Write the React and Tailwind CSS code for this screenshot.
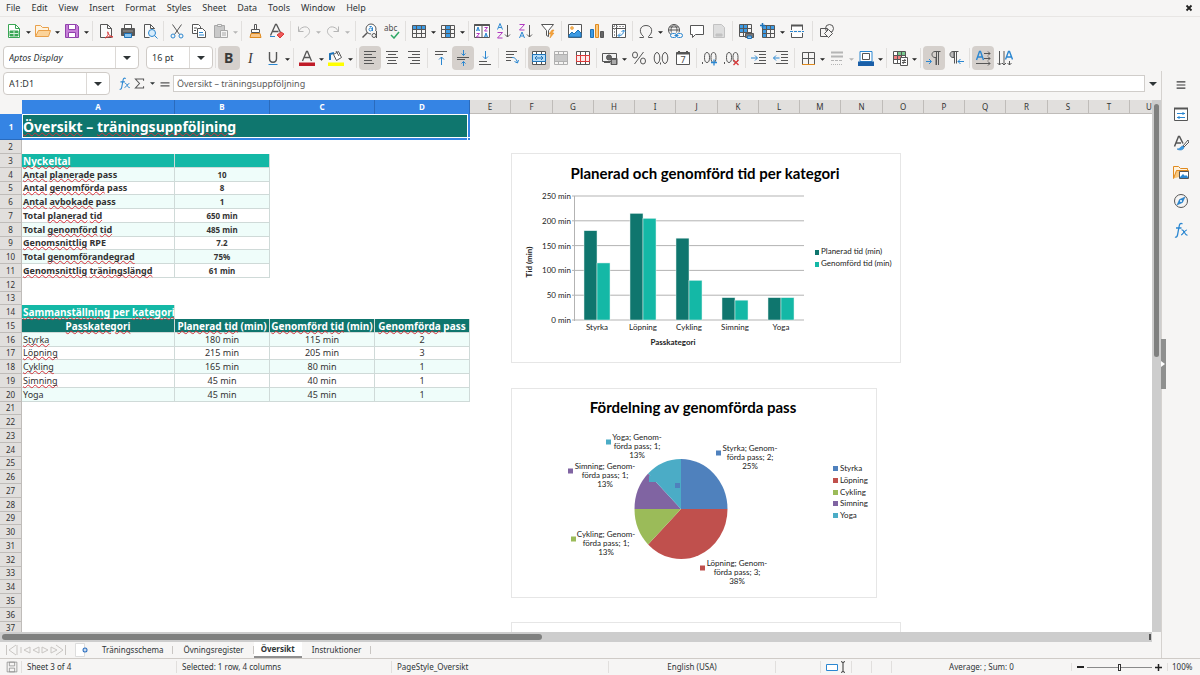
import React, { useState } from 'react';

const menus = ['File', 'Edit', 'View', 'Insert', 'Format', 'Styles', 'Sheet', 'Data', 'Tools', 'Window', 'Help'];
const letters = 'EFGHIJKLMNOPQRSTU'.split('');
const knownWords = ['pass', 'Total', 'RPE', 'per', 'Yoga', '(min)', '–'];

const keyFigures = {
  4: ['Antal planerade pass', '10'],
  5: ['Antal genomförda pass', '8'],
  6: ['Antal avbokade pass', '1'],
  7: ['Total planerad tid', '650 min'],
  8: ['Total genomförd tid', '485 min'],
  9: ['Genomsnittlig RPE', '7.2'],
  10: ['Total genomförandegrad', '75%'],
  11: ['Genomsnittlig träningslängd', '61 min'],
};

const categories = {
  16: ['Styrka', 180, 115, 2],
  17: ['Löpning', 215, 205, 3],
  18: ['Cykling', 165, 80, 1],
  19: ['Simning', 45, 40, 1],
  20: ['Yoga', 45, 45, 1],
};

/* ---------- icons ---------- */

const Icon = ({ children, className = 'w-4 h-4', stroke = '#565656' }) => (
  <svg viewBox="0 0 16 16" className={className} fill="none" stroke={stroke} strokeWidth="1" aria-hidden="true">
    {children}
  </svg>
);

const T = ({ x, y, size, fill, bold, italic, serif, children }) => (
  <text
    x={x}
    y={y}
    fontSize={size}
    fill={fill || '#4d4d4d'}
    stroke="none"
    fontWeight={bold ? 700 : 400}
    fontStyle={italic ? 'italic' : 'normal'}
    fontFamily={serif ? 'Liberation Serif, serif' : 'Noto Sans, sans-serif'}
  >
    {children}
  </text>
);

const gridLines = 'M1.5 2.5h13v12h-13zM1.5 6.5h13M1.5 10.5h13M5.5 2.5v12M10.5 2.5v12';

const icons = {
  newDoc: (
    <g stroke="#3aa655">
      <path d="M2.5 1.5h7l4 4v9h-11z" fill="#fff" />
      <path d="M9.5 1.5v4h4" />
      <path d="M4 8h8v5H4z" fill="#3aa655" />
      <path d="M4 10.5h8M8 8v5" stroke="#d5f0dc" />
    </g>
  ),
  open: (
    <g stroke="#e9a04a">
      <path d="M.5 13.5v-11h5l2 2h6v3" fill="#fff3df" />
      <path d="M.5 13.5l3-6h12l-2 6z" fill="#fbd39a" />
    </g>
  ),
  save: (
    <g stroke="#9141ac">
      <path d="M1.5 1.5h11l2 2v11h-13z" fill="#c77fd8" />
      <path d="M4.5 1.5h7v5h-7zM4.5 9.5h7v5h-7z" fill="#fff" />
    </g>
  ),
  pdf: (
    <g>
      <path d="M2.5 1.5h7l4 4v9h-11z" fill="#fafafa" />
      <path d="M9.5 1.5v4h4" />
      <path d="M7 15c3-2 4-5 3-6s-1 3 5 5c-3-1-6 0-8 1z" stroke="#d93a3a" />
    </g>
  ),
  print: (
    <g>
      <path d="M4.5 1.5h7v4h-7z" fill="#fff" />
      <path d="M1.5 5.5h13v7h-13z" fill="#5a5a5a" />
      <path d="M4.5 10.5h7v4h-7z" fill="#8cc4ee" stroke="#1e73b8" />
      <path d="M3 8h10" stroke="#9a9a9a" />
    </g>
  ),
  preview: (
    <g>
      <path d="M12.5 6V5.5l-4-4h-6v13h5" fill="#fafafa" />
      <path d="M8.5 1.5v4h4" />
      <circle cx="10" cy="10" r="3.5" fill="#d7ecfb" stroke="#2b87d1" />
      <path d="M12.5 12.5l3 3" stroke="#2b87d1" />
    </g>
  ),
  cut: (
    <g>
      <path d="M3.5 1.5l7 10M12.5 1.5l-7 10" />
      <circle cx="4" cy="13" r="2" stroke="#2b87d1" />
      <circle cx="12" cy="13" r="2" stroke="#2b87d1" />
    </g>
  ),
  copy: (
    <g>
      <path d="M1.5 1.5h6l2 2v7h-8z" fill="#fff" />
      <path d="M6.5 5.5h5l3 3v6h-8z" fill="#fff" />
      <path d="M3 5h3M3 7.5h2" />
      <path d="M8 9.5h4M8 12h5" stroke="#2b87d1" />
    </g>
  ),
  paste: (
    <g stroke="#a8a8a8">
      <path d="M1.5 2.5h10v12h-10z" fill="#c9c9c9" />
      <path d="M4.5 1.5h4v2h-4z" fill="#eee" />
      <path d="M7.5 7.5h7v7h-7z" fill="#f4f4f4" />
      <path d="M9 10h4M9 12h4" />
    </g>
  ),
  brush: (
    <g>
      <path d="M7.5 1.5h2v5h-2zM4.5 6.5h8v3h-8z" fill="#fff" />
      <path d="M4 10.5h9l1 4h-11z" fill="#f9c78a" stroke="#e08a1e" />
    </g>
  ),
  clear: (
    <g>
      <path d="M1.5 12.5l5-11h1l4 8M3.5 8.5h6" strokeWidth="1.3" />
      <path d="M8 12l4-3 3 2-4 4z" fill="#ee5a5a" stroke="#d93a3a" />
      <path d="M1 13.5h5" stroke="#2b87d1" />
    </g>
  ),
  undo: <path d="M2.5 3.5v5h5M2.5 8.5c3-6 10-6 11-1 .5 3-2 5-5 7" stroke="#b5b5b5" />,
  redo: <path d="M13.5 3.5v5h-5M13.5 8.5c-3-6-10-6-11-1-.5 3 2 5 5 7" stroke="#b5b5b5" />,
  find: (
    <g>
      <circle cx="9" cy="6" r="5" fill="#fff" />
      <path d="M5.5 9.5l-5 5" strokeWidth="1.5" />
      <circle cx="8.500" cy="6.500" r="1.500" stroke="#2b87d1" />
      <path d="M7.500 3.500h2l1 1v4" stroke="#2b87d1" />
      <path d="M9 8h6v8H9z" fill="#f6f5f4" stroke="none" />
      <circle cx="12" cy="12.500" r="2" />
      <path d="M14.500 8v7" />
    </g>
  ),
  spell: (
    <g>
      <T x="0" y="8" size="8">abc</T>
      <path d="M7 12l3 3 5-6" stroke="#2fa866" strokeWidth="1.5" />
    </g>
  ),
  row: (
    <g>
      <path d="M1 2.5h14v4H1z" fill="#3d9be4" stroke="none" />
      <path d={gridLines} />
    </g>
  ),
  col: (
    <g>
      <path d="M5 2h5v13H5z" fill="#3d9be4" stroke="none" />
      <path d={gridLines} />
    </g>
  ),
  sort: (
    <g>
      <path d="M.5 1.5h15v13H.5zM8 2v12" fill="#fff" />
      <path d="M.5 2h15" strokeWidth="2" />
      <path d="M2.500 8l1.500-4 1.500 4M3 7h2M10.500 14l1.500-4 1.500 4M11 13h2" stroke="#2b87d1" />
      <path d="M10.500 4.500h3l-3 3.500h3M2.500 10.500h3l-3 3.500h3" stroke="#b03ac0" />
    </g>
  ),
  sortAsc: (
    <g>
      <path d="M1.500 6.500L4 .500l2.500 6M2.500 4.500h3" stroke="#2b87d1" />
      <path d="M1.500 9.500h5l-5 5.500h5" stroke="#b03ac0" />
      <path d="M11.5 2v12M9 11.5l2.500 2.500 2.500-2.500" />
    </g>
  ),
  sortDesc: (
    <g>
      <path d="M1.500 1.500h5l-5 5.500h5" stroke="#b03ac0" />
      <path d="M1.500 15L4 9l2.500 6M2.500 13h3" stroke="#2b87d1" />
      <path d="M11.5 2v12M9 11.5l2.500 2.500 2.500-2.500" />
    </g>
  ),
  filter: (
    <g>
      <path d="M1.5 1.5h12l-5 6v6l-2-1v-5z" fill="#fff" />
      <path d="M12 7l-3 4h2l-1 4 4-5h-2l2-3z" fill="#f7a23b" stroke="#e08a1e" strokeWidth=".5" />
    </g>
  ),
  image: (
    <g>
      <path d="M1.5 1.5h13v13h-13z" fill="#fff" />
      <path d="M2 14v-2l3-3 2 2 4-4 3 3v4z" fill="#3d9be4" stroke="#1e73b8" />
      <circle cx="5" cy="5" r="1.5" fill="#f7b55b" stroke="#e08a1e" strokeWidth=".5" />
    </g>
  ),
  chart: (
    <g>
      <path d="M1.5 6.5h3v8h-3z" fill="#3d9be4" stroke="#1e73b8" />
      <path d="M6.5 1.5h3v13h-3z" fill="#fbc97f" stroke="#e08a1e" />
      <path d="M11.5 8.5h3v6h-3z" fill="#666" />
    </g>
  ),
  pivot: (
    <g>
      <path d="M1.5 1.5h13v13h-13zM5.5 1.5v13M1.5 5.5h13" fill="#fff" />
      <path d="M2 3.5h12M3.5 2v12" stroke="#9a9a9a" strokeDasharray="2 1" />
      <path d="M7.5 12.5c4 0 5-2 5-5M7 12.5l2-2M7 12.5l2 2M12.5 7l-2 2M12.5 7l2 2" stroke="#2b87d1" />
    </g>
  ),
  omega: <path d="M1.5 14.5h4v-1c-5-4-4-11 2.500-11s7.500 7 2.500 11v1h4" />,
  link: (
    <g>
      <circle cx="7" cy="7" r="5.5" />
      <path d="M1.5 7h11M7 1.5c-4 3-4 8 0 11M7 1.5c4 3 4 8 0 11M2.5 4h9" />
      <path d="M4 9.5h12v6H4z" fill="#f6f5f4" stroke="none" />
      <rect x="3.5" y="10.5" width="6" height="4" rx="2" stroke="#2b87d1" />
      <rect x="9.5" y="10.5" width="6" height="4" rx="2" stroke="#2b87d1" />
      <path d="M7.5 12.5h4" stroke="#2b87d1" />
    </g>
  ),
  comment: <path d="M1.5 2.5h13v9h-8l-3 3v-3h-2z" fill="#fff" />,
  headFoot: (
    <g stroke="#c2c2c2">
      <path d="M2.5 1.5h8l3 3v10h-11z" fill="#dedede" />
      <path d="M5 11h6v2H5z" fill="#c2c2c2" />
    </g>
  ),
  printArea: (
    <g>
      <path d="M1 2h9v7H1z" fill="#3d9be4" stroke="none" />
      <path d="M1.5 1.5h12v12h-12zM1.5 5.5h12M1.5 9.5h12M5.5 1.5v12M9.5 1.5v12" />
      <path d="M7.5 10.5h8v4h-8z" fill="#777" />
      <path d="M9.5 13h4v2.5h-4z" fill="#8cc4ee" stroke="#1e73b8" />
    </g>
  ),
  freeze: (
    <g>
      <path d="M3 3h4v12H3zM3 3h12v3H3z" fill="#3d9be4" stroke="none" />
      <path d="M2.5 2.5h12v12h-12zM2.5 6.5h12M2.5 10.5h12M6.5 2.5v12M10.5 2.5v12" />
      <path d="M0 2.5h5M2.5 0v5" stroke="#1e73b8" strokeWidth="1.5" />
    </g>
  ),
  split: (
    <g>
      <path d="M2.5 7V2.5h11V7M2.5 10v4.500h11V10" fill="#fff" />
      <path d="M2 2.5h12" strokeWidth="2" />
      <path d="M1 8.5h14" stroke="#2b87d1" strokeDasharray="3 1" />
    </g>
  ),
  shapes: (
    <g>
      <path d="M1.5 5.5h7v8h-7z" />
      <circle cx="10.5" cy="5.5" r="4" />
      <path d="M9.5 6.5l4 4-4 4-4-4z" fill="#f6f5f4" />
    </g>
  ),
  bold: <T x="3" y="13" size="14" bold fill="#3a3a3a">B</T>,
  italic: <T x="5" y="13" size="14" italic serif fill="#3a3a3a">I</T>,
  underline: (
    <g>
      <path d="M4.5 2v6.500c0 5 7 5 7 0V2" strokeWidth="1.4" />
      <path d="M3.5 14.5h9" stroke="#2b87d1" />
    </g>
  ),
  fontColor: (
    <g>
      <path d="M3.5 11l4-9.500h1l4 9.500M5 7.5h6" strokeWidth="1.3" />
      <path d="M0 12.5h16v3.500H0z" fill="#c01c28" stroke="none" />
    </g>
  ),
  highlight: (
    <g>
      <path d="M5.5 4.5l5-3 3 6-5 3z" fill="#fff" />
      <path d="M2 10V4l4-1" stroke="#1e73b8" strokeWidth="2" />
      <path d="M8 1l3 5" />
      <path d="M0 12.5h16v3.500H0z" fill="#ffff00" stroke="none" />
    </g>
  ),
  left: <path d="M2 1.5h12M2 4.500h8M2 7.500h12M2 10.500h8M2 13.500h10" />,
  center: <path d="M2 1.500h12M4 4.500h8M2 7.500h12M4 10.500h8M3 13.500h10" />,
  right: <path d="M2 1.500h12M6 4.500h8M2 7.500h12M6 10.500h8M4 13.500h10" />,
  top: (
    <g>
      <path d="M2 1.5h12M2 4.5h8" />
      <path d="M8.5 15V7M6 9.5L8.5 7 11 9.5" stroke="#2b87d1" />
    </g>
  ),
  middle: (
    <g>
      <path d="M2 7.5h12M2 9.5h8" />
      <path d="M8.5 0v5.500M6.5 3.5l2 2 2-2M8.5 16v-4.500M6.5 13.5l2-2 2 2" stroke="#2b87d1" />
    </g>
  ),
  bottom: (
    <g>
      <path d="M2 11.5h8M2 14.5h12" />
      <path d="M8.5 1v8M6 6.5L8.5 9 11 6.5" stroke="#2b87d1" />
    </g>
  ),
  wrap: (
    <g>
      <path d="M2 1.5h11M2 4.5h8M2 7.5h7M2 10.5h5" />
      <path d="M8 7.5c3 0 4 1 5.500 5M10.5 11.5l3 1.500 1-3" stroke="#2b87d1" />
    </g>
  ),
  merge: (
    <g>
      <path d="M1.5 1.5h13v13h-13zM1.5 4.5h13M1.5 11.5h13M5.5 1.5v3M10.5 1.5v3M5.5 11.5v3M10.5 11.5v3" fill="#fff" />
      <path d="M1.5 4.5h13v7h-13zM4 8h8M6 6L4 8l2 2M10 6l2 2-2 2" fill="#b5dcf8" stroke="#1e73b8" />
    </g>
  ),
  mergeGray: (
    <g stroke="#b0b0b0">
      <path d="M1.5 1.5h13v13h-13zM1.5 4.5h13M1.5 11.5h13M5.5 1.5v3M10.5 1.5v3M5.5 11.5v3M10.5 11.5v3" />
      <path d="M2 5h12v6H2z" fill="#c8c8c8" stroke="none" />
    </g>
  ),
  splitCells: (
    <g>
      <path d="M1.5 1.5h13v13h-13zM5.5 1.5v13M10.5 1.5v13" fill="#fff" />
      <path d="M1.5 5.5h13v6h-13zM5.5 5.5v6M10.5 5.5v6" stroke="#d93a3a" fill="#fdeaea" />
    </g>
  ),
  currency: (
    <g>
      <path d="M.5 3.5h14v8H.5z" fill="#f4f4f4" />
      <circle cx="7" cy="7.5" r="2.5" fill="#666" />
      <path d="M9 8.5h6v6H9zM2 12.5h6" fill="#666" />
      <path d="M10 11h4M10 13h4" stroke="#eee" />
    </g>
  ),
  percent: (
    <g>
      <ellipse cx="4" cy="5" rx="2.500" ry="3" />
      <ellipse cx="12" cy="11" rx="2.500" ry="3" />
      <path d="M12.500 2l-9 12" />
    </g>
  ),
  number: (
    <g>
      <ellipse cx="4" cy="8" rx="2.8" ry="5.5" />
      <ellipse cx="12" cy="8" rx="2.8" ry="5.5" />
      <path d="M7.5 12.5v2" />
    </g>
  ),
  date: (
    <g>
      <path d="M1.5 2.5h13v12h-13z" fill="#fff" />
      <path d="M1.5 3.5h13M4 1v3M12 1v3" strokeWidth="2" />
      <T x="5.500" y="13" size="9">7</T>
    </g>
  ),
  addDec: (
    <g>
      <path d="M.5 12v2" />
      <ellipse cx="5" cy="7.5" rx="2.5" ry="5" />
      <ellipse cx="11.5" cy="7.5" rx="2.5" ry="5" />
      <path d="M9 12.5h6M12 9.5v6" stroke="#2b87d1" strokeWidth="1.3" />
    </g>
  ),
  delDec: (
    <g>
      <path d="M.5 12v2" />
      <ellipse cx="5" cy="7.5" rx="2.5" ry="5" />
      <ellipse cx="11.5" cy="7.5" rx="2.5" ry="5" />
      <path d="M9.5 10l5 5M14.5 10l-5 5" stroke="#d93a3a" strokeWidth="1.3" />
    </g>
  ),
  indent: (
    <g>
      <path d="M3 1.5h12M8 4.5h7M8 7.5h7M8 10.5h7M3 13.5h12" />
      <path d="M0 8h6M4 5.5L6.5 8 4 10.5" stroke="#2b87d1" />
    </g>
  ),
  outdent: (
    <g>
      <path d="M3 1.5h12M8 4.5h7M8 7.5h7M8 10.5h7M3 13.5h12" />
      <path d="M.5 8h6M3 5.5L.5 8 3 10.5" stroke="#2b87d1" />
    </g>
  ),
  borders: (
    <g>
      <path d="M2.5 14V2.5h12V14M8.5 2v12M2 8.5h12" />
      <path d="M2 14.5h13" stroke="#e08a1e" />
    </g>
  ),
  lineStyle: (
    <g stroke="#b5b5b5">
      <path d="M2 2.5h12" strokeWidth="2" />
      <path d="M2 6.5h12" strokeWidth="2" />
      <path d="M2 10.5h12" strokeDasharray="3 1" />
      <path d="M2 14.5h12" strokeDasharray="1 1" />
    </g>
  ),
  borderColor: (
    <g>
      <path d="M2 1.5h12v10H2z" stroke="#2b87d1" fill="#fff" />
      <path d="M4.5 3.5h7v6h-7z" />
      <path d="M0 11.5h16v4.500H0z" fill="#1a5fa8" stroke="none" />
    </g>
  ),
  cond: (
    <g>
      <path d="M1.5 1.5h12v12h-12z" fill="#fff" />
      <path d="M5 2h8v3H5z" fill="#7ac98f" stroke="none" />
      <path d="M2 5h7v5H2z" fill="#f08080" stroke="none" />
      <path d="M1.5 5.5h12M1.5 9.5h12M5.5 1.5v12M9.5 1.5v12" />
      <path d="M8.5 7.5h7v8h-7z" fill="#fff" />
      <path d="M10 10.5h4M10 12.5h4M13 9l-2 5" />
    </g>
  ),
  ltr: (
    <g>
      <path d="M14.5 1.5H9c-4 0-4 6 0 6h1V15M10.5 1.5V15M12.5 1.5V15" />
      <path d="M0 11.5h5M3 9l2.500 2.500L3 14" stroke="#2b87d1" />
    </g>
  ),
  rtl: (
    <g>
      <path d="M5 1.5c-4 0-4 6 0 6h1v-6z" fill="#bbb" />
      <path d="M10.500 1.500H5M6.500 1.500v12M8.500 1.500v12" />
      <path d="M10 11.5h6M12.5 9L10 11.5l2.500 2.500" stroke="#2b87d1" />
    </g>
  ),
  horiz: (
    <g>
      <path d="M1.5 10l3-8.500h1l3 8.500M3 7h5" stroke="#2b87d1" strokeWidth="1.4" />
      <path d="M9 3.5h6M9 8.5h6M1 13.5h14M13 1.5l2 2-2 2M13 6.5l2 2-2 2M13 11.5l2 2-2 2" />
    </g>
  ),
  vert: (
    <g>
      <path d="M8.5 9.500l3-8h1l3 8M10 7h4" stroke="#2b87d1" strokeWidth="1.4" />
      <path d="M2.500 1v14M7 1v14M12.500 11v4M.5 13l2 2 2-2M5 13l2 2 2-2M10.5 13l2 2 2-2" />
    </g>
  ),
  fx: (
    <g>
      <path d="M9.5 2c-2-1.500-3 0-3.500 3l-1.500 8c-.5 2-1.500 2.500-2.500 2M3 6h5.500" stroke="#2b87d1" strokeWidth="1.3" />
      <path d="M8.5 8c3-1 3 6 6 5M14 8c-2-.5-4 5-6 5" stroke="#2b87d1" strokeWidth="1.2" />
    </g>
  ),
  sum: <path d="M13 4.5v-2H3l5 5.500-5 5.500h10v-2" strokeWidth="1.3" />,
  equals: <path d="M2 6.5h12M2 10.5h12" strokeWidth="1.5" />,
  hamburger: <path d="M1 3h14M1 8h14M1 13h14" stroke="#3a3a3a" strokeWidth="1.8" />,
  properties: (
    <g>
      <path d="M1.5 2.5h13v12h-13z" fill="#fff" />
      <path d="M1 2.5h14" strokeWidth="2" />
      <path d="M4 7.5h8M4 11.5h8M10 6v3M6 10v3" stroke="#2b87d1" />
    </g>
  ),
  styles: (
    <g>
      <path d="M1.5 11.5l4-10h1l3.500 7M3 8h5" strokeWidth="1.5" />
      <path d="M15 5l-5 6 1 1 5-5z" fill="#fff" />
      <path d="M10 11c-3 0-2 3-6 3 3 2 7 1 7-2z" fill="#3d9be4" stroke="#1e73b8" strokeWidth=".5" />
    </g>
  ),
  gallery: (
    <g>
      <path d="M.5 14.5v-12h5l2 2h7v3" stroke="#e08a1e" fill="#fff3df" />
      <path d="M.5 14.5l3-8h12v4" stroke="#e08a1e" fill="#fbc97f" />
      <path d="M6.5 7.5h9v7h-9z" fill="#fff" />
      <path d="M7 14v-1l3-3 2 2 1-1 2 2v1z" fill="#2b87d1" stroke="none" />
    </g>
  ),
  compass: (
    <g>
      <circle cx="8" cy="8" r="6.5" />
      <path d="M12 4l-2.500 5.500L4 12l2.500-5.500z" fill="#2b87d1" stroke="#1e73b8" strokeWidth=".5" />
      <circle cx="8" cy="8" r="1" fill="#fff" stroke="none" />
    </g>
  ),
};

const Caret = ({ className = 'w-2 h-2' }) => (
  <svg viewBox="0 0 8 8" className={className} fill="currentColor" aria-hidden="true">
    <path d="M0 2h8L4 6z" />
  </svg>
);

const IconButton = ({ icon, active }) => (
  <button
    type="button"
    aria-label={icon}
    aria-pressed={active}
    className={`flex h-6 w-[22px] shrink-0 items-center justify-center rounded ${active ? 'bg-[#d5d0cc]' : 'hover:bg-black/5'}`}
  >
    <Icon>{icons[icon]}</Icon>
  </button>
);

const Drop = ({ gray }) => (
  <button
    type="button"
    aria-label="More options"
    className={`flex h-6 w-[7px] shrink-0 items-center justify-center pt-1 ${gray ? 'text-[#b5b5b5]' : 'text-[#222]'}`}
  >
    <Caret className="h-[5px] w-[5px]" />
  </button>
);

const Sep = ({ wide }) => (
  <span className={`flex shrink-0 justify-center ${wide ? 'w-2' : 'w-[5px]'}`}>
    <span className="h-5 w-px bg-[#e1dfdd]" />
  </span>
);

// '|' separator, '||' wide separator, 'v' arrow, 'g' gray arrow, '*' marks a pressed button
const Toolbar = ({ items }) =>
  items.map((item, i) => {
    if (item === '|') return <Sep key={i} />;
    if (item === '||') return <Sep key={i} wide />;
    if (item === 'v') return <Drop key={i} />;
    if (item === 'g') return <Drop key={i} gray />;
    return <IconButton key={i} icon={item.replace('*', '')} active={item.endsWith('*')} />;
  });

const standardBar = [
  'newDoc', 'v', 'open', 'v', 'save', 'v', '|', 'pdf', 'print', 'preview', '|', 'cut', 'copy', 'paste', 'g', '|',
  'brush', 'clear', '|', 'undo', 'g', 'redo', 'g', '||', 'find', 'spell', '|', 'row', 'v', 'col', 'v', '|',
  'sort', 'sortAsc', 'sortDesc', 'filter', '|', 'image', 'chart', 'pivot', '|', 'omega', 'v', 'link', 'comment',
  'headFoot', '|', 'printArea', 'freeze', 'v', 'split', '||', 'shapes',
];

const formatBar = [
  '|', 'bold*', 'italic', 'underline', 'v', '|', 'fontColor', 'v', 'highlight', 'v', '|', 'left*', 'center', 'right',
  '|', 'top', 'middle*', 'bottom', '|', 'wrap', '|', 'merge*', 'mergeGray', 'splitCells', '|', 'currency', 'v',
  'percent', 'number', 'date', '|', 'addDec', 'delDec', '|', 'indent', 'outdent', '|', 'borders', 'v', 'lineStyle',
  'g', 'borderColor', 'v', '|', 'cond', 'v', '|', 'ltr*', 'rtl', '|', 'horiz*', 'vert',
];

const Combo = ({ label, value, className, inputClass = '' }) => (
  <div className={`flex h-[23px] shrink-0 rounded border border-[#cfcbc7] bg-white ${className}`}>
    <input aria-label={label} defaultValue={value} className={`min-w-0 flex-1 rounded pl-[5px] outline-none ${inputClass}`} />
    <button type="button" aria-label={`${label} list`} className="flex w-[23px] items-center justify-center border-l border-[#dcd9d6]">
      <Caret />
    </button>
  </div>
);

/* ---------- sheet ---------- */

const Spell = ({ text }) =>
  text.split(' ').map((word, i) => (
    <React.Fragment key={i}>
      {i > 0 && ' '}
      {knownWords.includes(word) ? (
        word
      ) : (
        <span className="underline decoration-[#d6303a] decoration-wavy decoration-1 underline-offset-0 [text-decoration-skip-ink:none]">
          {word}
        </span>
      )}
    </React.Fragment>
  ));

const cell = 'border-b border-r border-[#cfdad8] p-0 whitespace-nowrap leading-[12px]';

const RowCells = ({ n }) => {
  if (n === 3) {
    return (
      <>
        <td className={`${cell} bg-[#14b8a6] pl-px text-[10px] font-bold text-white`}><Spell text="Nyckeltal" /></td>
        <td className={`${cell} bg-[#14b8a6]`} />
      </>
    );
  }
  if (keyFigures[n]) {
    const fill = n % 2 === 0 ? 'bg-[#effdfa]' : 'bg-white';
    return (
      <>
        <td className={`${cell} ${fill} pl-px font-bold`}><Spell text={keyFigures[n][0]} /></td>
        <td className={`${cell} ${fill} text-center text-[8px] font-bold`}>{keyFigures[n][1]}</td>
      </>
    );
  }
  if (n === 14) {
    return <td className={`${cell} bg-[#14b8a6] pl-px text-[10px] font-bold text-white`}><Spell text="Sammanställning per kategori" /></td>;
  }
  if (n === 15) {
    return ['Passkategori', 'Planerad tid (min)', 'Genomförd tid (min)', 'Genomförda pass'].map((title) => (
      <td key={title} className={`${cell} bg-[#0f766e] text-center text-[10px] font-bold text-white`}><Spell text={title} /></td>
    ));
  }
  if (categories[n]) {
    const [name, planned, done, count] = categories[n];
    const fill = n % 2 === 0 ? 'bg-[#effdfa]' : 'bg-white';
    return (
      <>
        <td className={`${cell} ${fill} pl-px`}><Spell text={name} /></td>
        <td className={`${cell} ${fill} text-center`}>{planned} min</td>
        <td className={`${cell} ${fill} text-center`}>{done} min</td>
        <td className={`${cell} ${fill} text-center`}>{count}</td>
      </>
    );
  }
  return null;
};

const SheetTable = () => {
  const rows = Array.from({ length: 36 }, (_, i) => i + 2);
  return (
    <table className="w-full table-fixed border-separate border-spacing-0 text-[9px] text-[#333]">
      <colgroup>
        <col className="w-[22px]" />
        <col className="w-[153px]" />
        <col className="w-[95px]" />
        <col className="w-[105px]" />
        <col className="w-[95px]" />
        {letters.slice(0, -1).map((l, i) => (
          <col key={l} className={i % 4 === 1 ? 'w-[42px]' : 'w-[41px]'} />
        ))}
        <col />
      </colgroup>
      <thead>
        <tr className="h-[14px] leading-[12px]">
          <th className="bg-[#f6f5f4] p-0" />
          {['A', 'B', 'C', 'D'].map((l) => (
            <th key={l} scope="col" className="border-r border-[#2a6bbd] bg-[#3584e4] p-0 text-[8px] font-bold text-white">{l}</th>
          ))}
          {letters.map((l) => (
            <th key={l} scope="col" className={`overflow-hidden border-b border-[#bfbcb9] bg-[#e1dfdd] p-0 text-[8px] font-normal ${l === 'U' ? 'pl-4 text-left' : 'border-r'}`}>
              {l}
            </th>
          ))}
        </tr>
      </thead>
      <tbody>
        <tr className="h-[26px]">
          <th scope="row" className="border-b border-[#2a6bbd] bg-[#3584e4] p-0 text-[8px] font-bold text-white">1</th>
          <td colSpan="4" className="relative border-r-2 border-b-2 border-[#3584e4] p-0">
            <div className="h-6 border border-white bg-[#0f766e] text-[14px] leading-[23px] font-bold whitespace-nowrap text-white">
              <Spell text="Översikt – träningsuppföljning" />
            </div>
            <span className="absolute -right-[3px] -bottom-[3px] h-1 w-1 border border-white bg-[#3584e4]" />
          </td>
        </tr>
        {rows.map((n) => (
          <tr key={n} className={n % 4 === 1 ? 'h-[13px]' : 'h-[14px]'}>
            <th scope="row" className="border-r border-b border-[#bfbcb9] bg-[#e1dfdd] p-0 text-[8px] leading-[12px] font-normal">{n}</th>
            <RowCells n={n} />
          </tr>
        ))}
      </tbody>
    </table>
  );
};

/* ---------- charts ---------- */

const BarChart = () => {
  const data = Object.values(categories);
  const y = (v) => 166 - v * 0.496;
  return (
    <svg viewBox="0 0 388 208" className="block w-full" fontFamily="Lato, sans-serif" fontSize="8" fill="#222">
      <text x="193" y="25" fontSize="15" fontWeight="700" fill="#000" textAnchor="middle">Planerad och genomförd tid per kategori</text>
      {[0, 50, 100, 150, 200, 250].map((v) => (
        <g key={v}>
          <path d={`M60 ${y(v)}H292`} stroke="#b3b3b3" />
          <text x="59" y={y(v) + 3} textAnchor="end">{v} min</text>
        </g>
      ))}
      <path d="M62.5 42v125" stroke="#b3b3b3" />
      {data.map(([name, planned, done], i) => (
        <g key={name}>
          <rect x={72 + i * 46} y={y(planned)} width="13" height={166 - y(planned)} fill="#0f766e" stroke="#e3f1ef" strokeWidth=".5" />
          <rect x={85 + i * 46} y={y(done)} width="13" height={166 - y(done)} fill="#14b8a6" stroke="#e3f1ef" strokeWidth=".5" />
          <text x={85 + i * 46} y="176" textAnchor="middle">{name}</text>
        </g>
      ))}
      <text x="161" y="191" fontWeight="700" textAnchor="middle">Passkategori</text>
      <text x="20" y="108" fontWeight="700" textAnchor="middle" transform="rotate(-90 20 108)">Tid (min)</text>
      <rect x="303" y="96" width="4" height="5" fill="#0f766e" />
      <text x="309" y="100">Planerad tid (min)</text>
      <rect x="303" y="108" width="4" height="5" fill="#14b8a6" />
      <text x="309" y="112">Genomförd tid (min)</text>
    </svg>
  );
};

const slices = [
  { name: 'Styrka', count: 2, percent: 25, color: '#4f81bd', path: 'M169 120V70A46.5 50 0 0 1 215.5 120z', x: 238, y: 62, mx: 204 },
  { name: 'Löpning', count: 3, percent: 38, color: '#c0504d', path: 'M169 120H215.5A46.5 50 0 0 1 136.1 155.4z', x: 225, y: 177, mx: 188 },
  { name: 'Cykling', count: 1, percent: 13, color: '#9bbb59', path: 'M169 120L136.1 155.4A46.5 50 0 0 1 122.5 120z', x: 94, y: 148, mx: 59 },
  { name: 'Simning', count: 1, percent: 13, color: '#8064a2', path: 'M169 120H122.5A46.5 50 0 0 1 136.1 84.6z', x: 93, y: 80, mx: 56 },
  { name: 'Yoga', count: 1, percent: 13, color: '#4bacc6', path: 'M169 120L136.1 84.6A46.5 50 0 0 1 169 70z', x: 125, y: 51, mx: 94 },
];

const PieChart = () => (
  <svg viewBox="0 0 364 208" className="block w-full" fontFamily="Lato, sans-serif" fontSize="8" fill="#222">
    <text x="181" y="24" fontSize="15" fontWeight="700" fill="#000" textAnchor="middle">Fördelning av genomförda pass</text>
    {slices.map((s, i) => (
      <g key={s.name}>
        <path d={s.path} fill={s.color} />
        <rect x={s.mx} y={s.y - 0.5} width="5" height="5" fill={s.color} />
        <text textAnchor="middle">
          <tspan x={s.x} y={s.y}>{s.name}; Genom-</tspan>
          <tspan x={s.x} y={s.y + 9}>förda pass; {s.count};</tspan>
          <tspan x={s.x} y={s.y + 18}>{s.percent}%</tspan>
        </text>
        <rect x="321" y={77 + i * 12 - (i > 2 ? 1 : 0)} width="5" height="5" fill={s.color} />
        <text x="328" y={82 + i * 12 - (i > 2 ? 1 : 0)}>{s.name}</text>
      </g>
    ))}
    <rect x="137" y="87" width="7" height="6" fill="#4bacc6" />
    <rect x="163" y="94" width="5" height="5" fill="#4f81bd" />
  </svg>
);

const sheetTabs = ['Träningsschema', 'Övningsregister', 'Översikt', 'Instruktioner'];

const App = () => {
  const [activeTab, setActiveTab] = useState('Översikt');
  const [zoom, setZoom] = useState(50);

  return (
    <div className="flex h-screen flex-col overflow-hidden bg-[#f6f5f4] font-['Noto_Sans',sans-serif] text-[9px] text-[#2e3436]">
      {/* Menu bar */}
      <nav className="flex h-[17px] shrink-0 items-center gap-px border-b border-[#e8e6e4] pl-px">
        {menus.map((m) => (
          <button key={m} type="button" className="px-[5px]">{m}</button>
        ))}
        <button type="button" aria-label="Close" className="mr-[7px] ml-auto">
          <svg viewBox="0 0 8 8" className="h-2 w-2" stroke="#222" strokeWidth="1.8"><path d="M1.5 1.5l5 5M6.5 1.5l-5 5" /></svg>
        </button>
      </nav>

      {/* Toolbars */}
      <div className="flex h-[27px] shrink-0 items-center pl-[3px]"><Toolbar items={standardBar} /></div>
      <div className="flex h-[27px] shrink-0 items-center pl-[3px]">
        <Combo label="Font name" value="Aptos Display" className="w-[136px]" inputClass="italic" />
        <Combo label="Font size" value="16 pt" className="ml-[7px] w-[67px]" />
        <Toolbar items={formatBar} />
      </div>

      <div className="flex min-h-0 flex-1">
        <div className="flex min-w-0 flex-1 flex-col">
          {/* Formula bar */}
          <div className="flex h-[29px] shrink-0 items-center pb-1 pl-[3px]">
            <Combo label="Name box" value="A1:D1" className="w-[107px]" />
            <button type="button" aria-label="Function wizard" className="ml-2"><Icon className="h-[13px] w-[13px]">{icons.fx}</Icon></button>
            <button type="button" aria-label="Select function" className="ml-[2px] flex items-center gap-1">
              <Icon className="h-[13px] w-[13px]">{icons.sum}</Icon>
              <Caret className="h-[5px] w-[5px]" />
            </button>
            <button type="button" aria-label="Formula" className="ml-1"><Icon className="h-3 w-3">{icons.equals}</Icon></button>
            <input aria-label="Input line" defaultValue="Översikt – träningsuppföljning" className="ml-[2px] h-[17px] min-w-0 flex-1 border border-[#d0cdca] bg-white pl-[3px] text-[#5a5a5a] outline-none" />
            <button type="button" aria-label="Expand formula bar" className="mx-1"><Caret /></button>
          </div>

          {/* Sheet */}
          <div className="flex min-h-0 flex-1">
            <div className="relative min-w-0 flex-1 overflow-hidden bg-white">
              <SheetTable />
              <div className="absolute top-[53px] left-[511px] w-[390px] border border-[#e6e6e6] bg-white"><BarChart /></div>
              <div className="absolute top-[288px] left-[511px] w-[366px] border border-[#e6e6e6] bg-white"><PieChart /></div>
              <div className="absolute top-[522px] left-[511px] h-[210px] w-[390px] border border-[#e6e6e6] bg-white" />
            </div>
            <div className="w-[9px] shrink-0 bg-[#cdcdcd] px-[2px] pt-1">
              <div className="h-[48%] w-[5px] rounded-full bg-[#7f807f]" />
            </div>
          </div>
          <div className="mr-[9px] flex h-[10px] shrink-0 items-center justify-between bg-[#cdcdcd] pr-px pl-[2px]">
            <div className="h-[6px] w-[47%] rounded-full bg-[#7f807f]" />
            <span className="h-[6px] w-[2px] bg-[#555]" />
          </div>

          {/* Sheet tabs */}
          <div className="flex h-[16px] shrink-0 items-stretch text-[8px]">
            <svg viewBox="0 0 62 12" className="mt-[2px] ml-[5px] h-3 w-[62px]" fill="none" stroke="#c9c6c3">
              <path d="M1.5 1v10M11 1L4 6l7 5M12 1v10M16 3v6M25 3l-6 3 6 3zM34 3l-6 3 6 3zM37 3v6l6-3zM46 3v6l6-3zM51 1l7 5-7 5M60.5 1v10" />
            </svg>
            <button type="button" aria-label="Add sheet" className="ml-2 flex w-[17px] items-center">
              <svg viewBox="0 0 16 14" className="h-[14px] w-4" fill="#fff" stroke="#ddd">
                <path d="M.5 .5h9v13h-9z" />
                <circle cx="10" cy="7" r="2.5" fill="#2b6fc0" stroke="none" />
                <path d="M8.5 7h3M10 5.5v3" stroke="#fff" />
              </svg>
            </button>
            {sheetTabs.map((tab) => (
              <button
                key={tab}
                type="button"
                onClick={() => setActiveTab(tab)}
                className={tab === activeTab
                  ? 'border-b-2 border-[#8f8f8f] bg-white px-[7px] font-bold'
                  : 'flex items-center before:mr-[9px] before:h-2 before:w-px after:ml-[9px] after:h-2 after:w-px after:bg-[#c9c6c3]'}
              >
                {tab}
              </button>
            ))}
          </div>
        </div>

        {/* Sidebar */}
        <aside className="relative flex w-[39px] shrink-0 flex-col items-center gap-[13px] border-l border-[#d5d2cf] pt-[6px]">
          {['hamburger', 'properties', 'styles', 'gallery', 'compass', 'fx'].map((name) => (
            <button key={name} type="button" aria-label={name} className="flex h-4 w-4 items-center justify-center">
              {name === 'hamburger' ? <Icon className="h-[10px] w-[10px]">{icons[name]}</Icon> : <Icon>{icons[name]}</Icon>}
            </button>
          ))}
          <button type="button" aria-label="Hide sidebar" className="absolute top-[268px] -left-px flex h-[50px] w-[5px] items-center bg-[#8f908f]">
            <svg viewBox="0 0 4 6" className="h-[6px] w-1" fill="#fff"><path d="M0 0l4 3-4 3z" /></svg>
          </button>
        </aside>
      </div>

      {/* Status bar */}
      <footer className="flex h-[17px] shrink-0 items-center border-t border-[#cfcbc7] text-[8px]">
        <Icon className="ml-[6px] h-3 w-3" stroke="#8a8a8a">
          <path d="M1.5 1.5h13v13h-13zM4.5 1.5h7v5h-7zM4.5 9.5h7v5h-7z" />
        </Icon>
        <span className="ml-[3px] w-[155px] border-l border-[#e1dfdd] pl-[5px]">Sheet 3 of 4</span>
        <span className="w-[215px] border-l border-[#e1dfdd] pl-[5px]">Selected: 1 row, 4 columns</span>
        <span className="w-[217px] border-l border-[#e1dfdd] pl-[5px]">PageStyle_Oversikt</span>
        <span className="flex-1 border-l border-[#e1dfdd] text-center">English (USA)</span>
        <span className="h-3 w-[45px] border-l border-[#e1dfdd]" />
        <span className="flex w-[31px] justify-center border-l border-[#e1dfdd]">
          <svg viewBox="0 0 20 12" className="h-3 w-5 shrink-0" fill="none">
            <path d="M.5 3.5h11v6H.5z" stroke="#2b87d1" fill="#fff" />
            <path d="M17 1.5v9M15 .5l2 1 2-1M15 11.5l2-1 2 1" stroke="#333" />
          </svg>
        </span>
        <span className="h-3 w-5 border-l border-[#e1dfdd]" />
        <span className="h-3 w-5 border-l border-[#e1dfdd]" />
        <span className="w-[180px] border-l border-[#e1dfdd] text-center">Average: ; Sum: 0</span>
        <div className="flex items-center gap-[3px] border-x border-[#e1dfdd] px-[5px]">
          <button type="button" aria-label="Zoom out" className="h-[2px] w-[7px] bg-[#222]" />
          <input
            type="range"
            aria-label="Zoom"
            value={zoom}
            onChange={(e) => setZoom(e.target.value)}
            className="h-2 w-[65px] appearance-none bg-[linear-gradient(#8a8a8a,#8a8a8a)] bg-[length:100%_1px] bg-center bg-no-repeat [&::-webkit-slider-thumb]:h-[7px] [&::-webkit-slider-thumb]:w-[3px] [&::-webkit-slider-thumb]:appearance-none [&::-webkit-slider-thumb]:border [&::-webkit-slider-thumb]:border-[#333] [&::-webkit-slider-thumb]:bg-white"
          />
          <button type="button" aria-label="Zoom in">
            <svg viewBox="0 0 7 7" className="h-[7px] w-[7px]" stroke="#222" strokeWidth="1.5"><path d="M0 3.5h7M3.5 0v7" /></svg>
          </button>
        </div>
        <span className="w-8 pl-1">100%</span>
      </footer>
    </div>
  );
};

export default App;
